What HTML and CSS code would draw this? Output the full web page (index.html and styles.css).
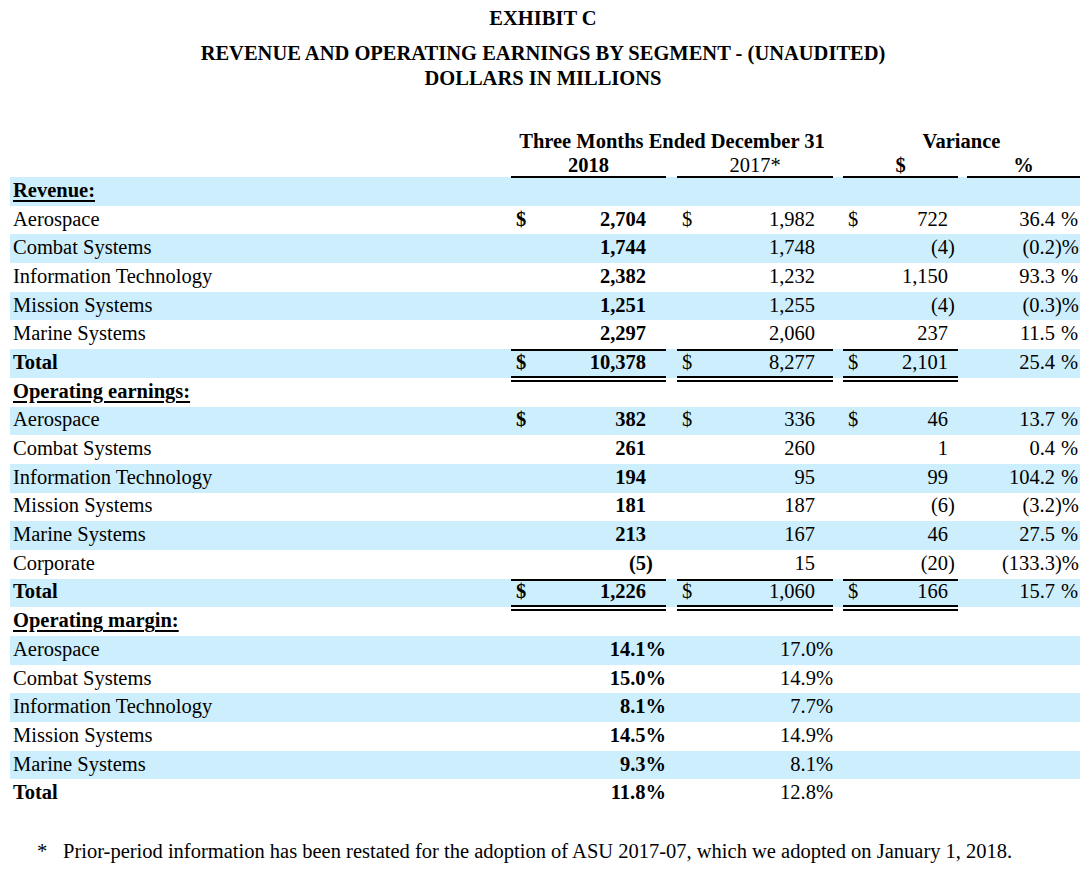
FILE: index.html
```html
<!DOCTYPE html>
<html lang="en">
<head>
<meta charset="utf-8">
<title>Exhibit C</title>
<link rel="stylesheet" href="styles.css">
</head>
<body>
<div class="page">
  <div class="title">
    <div class="ex">EXHIBIT C</div>
    <div class="sub">REVENUE AND OPERATING EARNINGS BY SEGMENT - (UNAUDITED)<br>DOLLARS IN MILLIONS</div>
  </div>

  <table class="fin">
    <colgroup>
      <col class="c-lbl"><col class="c-cur"><col class="c-n1"><col class="c-s1">
      <col class="c-g1"><col class="c-cur"><col class="c-n2"><col class="c-s2">
      <col class="c-g2"><col class="c-cur"><col class="c-n3"><col class="c-s3">
      <col class="c-g3"><col class="c-n4"><col class="c-s4">
    </colgroup>
    <thead>
      <tr class="h1">
        <th></th>
        <th colspan="7" class="b">Three Months Ended December 31</th>
        <th></th>
        <th colspan="6" class="b">Variance</th>
      </tr>
      <tr class="h2">
        <th></th>
        <th colspan="3" class="b ul">2018</th>
        <th></th>
        <th colspan="3" class="ul">2017*</th>
        <th></th>
        <th colspan="3" class="b ul">$</th>
        <th></th>
        <th colspan="2" class="b ul">%</th>
      </tr>
    </thead>
    <tbody>
      <tr class="sec"><td class="lbl"><span class="secname">Revenue:</span></td><td colspan="14"></td></tr>
      <tr><td class="lbl">Aerospace</td><td class="cur b">$</td><td class="num b">2,704</td><td class="suf"></td><td></td><td class="cur">$</td><td class="num">1,982</td><td class="suf"></td><td></td><td class="cur">$</td><td class="num">722</td><td class="suf"></td><td></td><td class="num">36.4</td><td class="pct">%</td></tr>
      <tr><td class="lbl">Combat Systems</td><td class="cur"></td><td class="num b">1,744</td><td class="suf"></td><td></td><td class="cur"></td><td class="num">1,748</td><td class="suf"></td><td></td><td class="cur"></td><td class="num">(4</td><td class="suf">)</td><td></td><td class="num">(0.2</td><td class="pct">)%</td></tr>
      <tr><td class="lbl">Information Technology</td><td class="cur"></td><td class="num b">2,382</td><td class="suf"></td><td></td><td class="cur"></td><td class="num">1,232</td><td class="suf"></td><td></td><td class="cur"></td><td class="num">1,150</td><td class="suf"></td><td></td><td class="num">93.3</td><td class="pct">%</td></tr>
      <tr><td class="lbl">Mission Systems</td><td class="cur"></td><td class="num b">1,251</td><td class="suf"></td><td></td><td class="cur"></td><td class="num">1,255</td><td class="suf"></td><td></td><td class="cur"></td><td class="num">(4</td><td class="suf">)</td><td></td><td class="num">(0.3</td><td class="pct">)%</td></tr>
      <tr><td class="lbl">Marine Systems</td><td class="cur"></td><td class="num b">2,297</td><td class="suf"></td><td></td><td class="cur"></td><td class="num">2,060</td><td class="suf"></td><td></td><td class="cur"></td><td class="num">237</td><td class="suf"></td><td></td><td class="num">11.5</td><td class="pct">%</td></tr>
      <tr class="tot"><td class="lbl b">Total</td><td class="cur b ln">$</td><td class="num b ln">10,378</td><td class="suf ln"></td><td></td><td class="cur ln">$</td><td class="num ln">8,277</td><td class="suf ln"></td><td></td><td class="cur ln">$</td><td class="num ln">2,101</td><td class="suf ln"></td><td></td><td class="num">25.4</td><td class="pct">%</td></tr>

      <tr class="sec"><td class="lbl"><span class="secname">Operating earnings:</span></td><td colspan="3" class="dl"></td><td></td><td colspan="3" class="dl"></td><td></td><td colspan="3" class="dl"></td><td colspan="3"></td></tr>
      <tr><td class="lbl">Aerospace</td><td class="cur b">$</td><td class="num b">382</td><td class="suf"></td><td></td><td class="cur">$</td><td class="num">336</td><td class="suf"></td><td></td><td class="cur">$</td><td class="num">46</td><td class="suf"></td><td></td><td class="num">13.7</td><td class="pct">%</td></tr>
      <tr><td class="lbl">Combat Systems</td><td class="cur"></td><td class="num b">261</td><td class="suf"></td><td></td><td class="cur"></td><td class="num">260</td><td class="suf"></td><td></td><td class="cur"></td><td class="num">1</td><td class="suf"></td><td></td><td class="num">0.4</td><td class="pct">%</td></tr>
      <tr><td class="lbl">Information Technology</td><td class="cur"></td><td class="num b">194</td><td class="suf"></td><td></td><td class="cur"></td><td class="num">95</td><td class="suf"></td><td></td><td class="cur"></td><td class="num">99</td><td class="suf"></td><td></td><td class="num">104.2</td><td class="pct">%</td></tr>
      <tr><td class="lbl">Mission Systems</td><td class="cur"></td><td class="num b">181</td><td class="suf"></td><td></td><td class="cur"></td><td class="num">187</td><td class="suf"></td><td></td><td class="cur"></td><td class="num">(6</td><td class="suf">)</td><td></td><td class="num">(3.2</td><td class="pct">)%</td></tr>
      <tr><td class="lbl">Marine Systems</td><td class="cur"></td><td class="num b">213</td><td class="suf"></td><td></td><td class="cur"></td><td class="num">167</td><td class="suf"></td><td></td><td class="cur"></td><td class="num">46</td><td class="suf"></td><td></td><td class="num">27.5</td><td class="pct">%</td></tr>
      <tr><td class="lbl">Corporate</td><td class="cur"></td><td class="num b">(5</td><td class="suf b">)</td><td></td><td class="cur"></td><td class="num">15</td><td class="suf"></td><td></td><td class="cur"></td><td class="num">(20</td><td class="suf">)</td><td></td><td class="num">(133.3</td><td class="pct">)%</td></tr>
      <tr class="tot"><td class="lbl b">Total</td><td class="cur b ln">$</td><td class="num b ln">1,226</td><td class="suf ln"></td><td></td><td class="cur ln">$</td><td class="num ln">1,060</td><td class="suf ln"></td><td></td><td class="cur ln">$</td><td class="num ln">166</td><td class="suf ln"></td><td></td><td class="num">15.7</td><td class="pct">%</td></tr>

      <tr class="sec"><td class="lbl"><span class="secname">Operating margin:</span></td><td colspan="3" class="dl"></td><td></td><td colspan="3" class="dl"></td><td></td><td colspan="3" class="dl"></td><td colspan="3"></td></tr>
      <tr><td class="lbl">Aerospace</td><td colspan="3" class="num b">14.1%</td><td></td><td colspan="3" class="num">17.0%</td><td colspan="7"></td></tr>
      <tr><td class="lbl">Combat Systems</td><td colspan="3" class="num b">15.0%</td><td></td><td colspan="3" class="num">14.9%</td><td colspan="7"></td></tr>
      <tr><td class="lbl">Information Technology</td><td colspan="3" class="num b">8.1%</td><td></td><td colspan="3" class="num">7.7%</td><td colspan="7"></td></tr>
      <tr><td class="lbl">Mission Systems</td><td colspan="3" class="num b">14.5%</td><td></td><td colspan="3" class="num">14.9%</td><td colspan="7"></td></tr>
      <tr><td class="lbl">Marine Systems</td><td colspan="3" class="num b">9.3%</td><td></td><td colspan="3" class="num">8.1%</td><td colspan="7"></td></tr>
      <tr><td class="lbl b">Total</td><td colspan="3" class="num b">11.8%</td><td></td><td colspan="3" class="num">12.8%</td><td colspan="7"></td></tr>
    </tbody>
  </table>

  <p class="note"><span class="star">*</span>Prior-period information has been restated for the adoption of ASU 2017-07, which we adopted on January 1, 2018.</p>
</div>
</body>
</html>
```

FILE: styles.css
```css
html, body {
  margin: 0;
  padding: 0;
  background: #ffffff;
}

body {
  font-family: "Liberation Serif", "Times New Roman", serif;
  font-size: 20.5px;
  color: #000;
}

.page {
  width: 1086px;
}

.title {
  text-align: center;
  font-weight: bold;
}

.ex {
  padding-top: 6px;
  line-height: 24px;
}

.sub {
  margin-top: 11px;
  line-height: 25px;
}

.fin {
  margin: 37px 0 0 10px;
  border-collapse: collapse;
  table-layout: fixed;
  width: 1070px;
}

.c-lbl { width: 501px; }
.c-cur { width: 20px; }
.c-n1 { width: 115px; }
.c-s1 { width: 20px; }
.c-g1 { width: 11px; }
.c-n2 { width: 118px; }
.c-s2 { width: 18px; }
.c-g2 { width: 10px; }
.c-n3 { width: 85px; }
.c-s3 { width: 10px; }
.c-g3 { width: 9px; }
.c-n4 { width: 88px; }
.c-s4 { width: 25px; }

.fin th {
  padding: 0;
  font-weight: normal;
  text-align: center;
  white-space: nowrap;
  line-height: 22px;
}

.fin th.b { font-weight: bold; }

.fin .h1 th { height: 25px; vertical-align: middle; }
.fin .h2 th { height: 23px; vertical-align: middle; }
.fin .h2 th.ul { border-bottom: 2px solid #000; }

.fin td {
  box-sizing: border-box;
  padding: 0 0 3px 0;
  height: 28.7px;
  line-height: 22px;
  white-space: nowrap;
  vertical-align: middle;
}

.fin tbody tr:nth-child(odd) {
  background: #cdeefc;
}

.b { font-weight: bold; }

.fin td.lbl {
  padding-left: 3px;
  text-align: left;
}

.secname {
  font-weight: bold;
  text-decoration: underline;
  text-decoration-thickness: 2px;
  text-underline-offset: 3px;
}

.fin td.cur {
  padding-left: 5px;
  text-align: left;
}

.num { text-align: right; }
.suf { text-align: left; }
.fin td.pct { text-align: right; padding-right: 2px; }

/* total rows: single rule above, first rule of double underline at bottom */
.tot td.ln {
  background-image:
    linear-gradient(#000, #000),
    linear-gradient(#000, #000);
  background-repeat: no-repeat;
  background-size: 100% 2px, 100% 2px;
  background-position: left 0 top 0, left 0 bottom 0;
}

/* second rule of double underline, at top of following row */
.sec td.dl {
  background-image: linear-gradient(#000, #000);
  background-repeat: no-repeat;
  background-size: 100% 2px;
  background-position: left 0 top 2px;
}

.note {
  margin: 31px 0 0 0;
  padding-left: 37px;
  line-height: 24px;
}

.star {
  display: inline-block;
  width: 26px;
}
```
